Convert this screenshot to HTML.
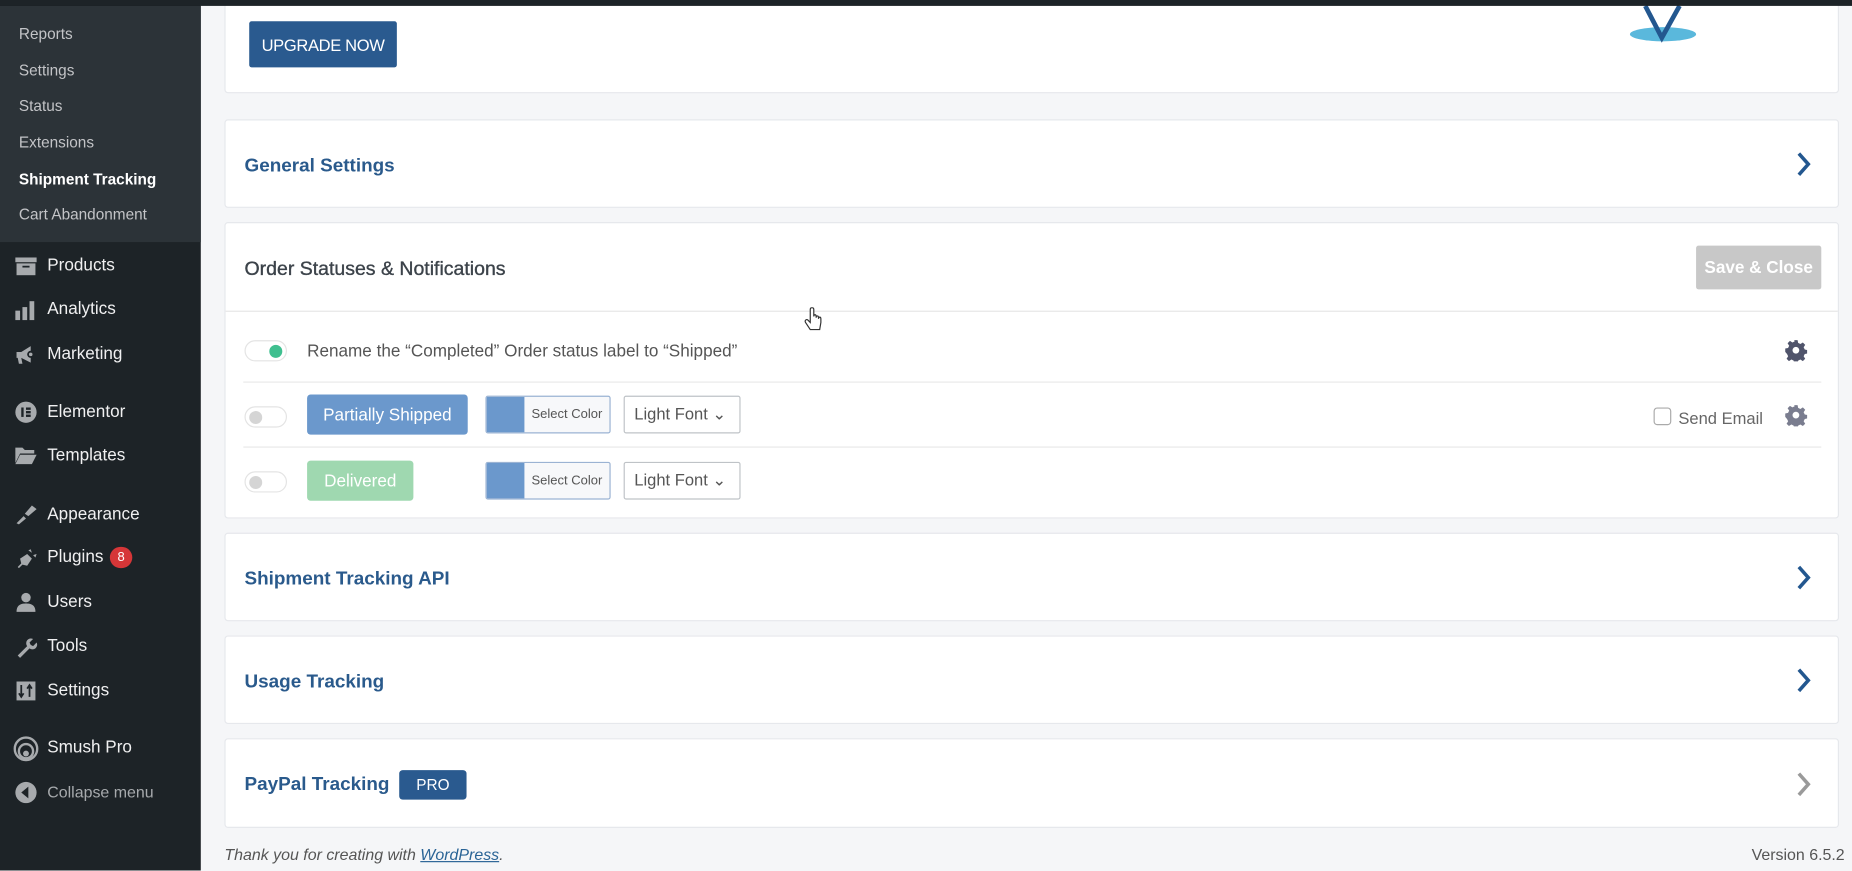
<!DOCTYPE html>
<html><head><meta charset="utf-8">
<style>
html,body{margin:0;padding:0;width:1852px;height:870px;overflow:hidden;background:#f5f6f8;}
#w{position:absolute;left:0;top:0;width:1568px;height:737px;transform:scale(1.18112);transform-origin:0 0;font-family:"Liberation Sans",sans-serif;background:#f5f6f8;}
.abs{position:absolute;}
#top{left:0;top:0;width:1568px;height:5px;background:#1d2327;z-index:10;}
#side{left:0;top:0;width:170px;height:737px;background:#1d2327;}
#sub{left:0;top:5px;width:170px;height:200px;background:#2c3338;}
.si{position:absolute;left:16px;font-size:13px;color:#c3c4c7;}
.mi{position:absolute;left:40px;font-size:14.5px;color:#f0f0f1;margin-top:2px;}
.ic{position:absolute;left:12px;width:20px;height:20px;margin-top:2px;}
.card{position:absolute;left:190px;width:1367px;background:#fff;border:1px solid #e6e8ec;border-radius:3px;box-sizing:border-box;}
.ttl{position:absolute;left:16px;font-size:16px;font-weight:bold;color:#2a5a8c;top:30px !important;}
.chev{position:absolute;right:22px;width:14px;height:22px;}
.tog{position:absolute;left:207px;width:36px;height:18px;border:1px solid #e4e4e4;border-radius:10px;background:#fff;box-sizing:border-box;}
.knob{position:absolute;top:3px;width:11px;height:11px;border-radius:50%;}
.hr{position:absolute;left:206px;width:1336px;height:1px;background:#e8e8e8;}
.selc{position:absolute;left:411px;width:106px;height:32px;border:1px solid #9bb3d3;border-radius:2px;box-sizing:border-box;background:#f7f8fa;overflow:hidden;}
.selc .sw{position:absolute;left:0;top:0;width:32px;height:32px;background:#6b98cc;}
.selc span{position:absolute;left:38px;top:9px;font-size:11px;color:#555;}
.dd{position:absolute;left:528px;width:99px;height:32px;border:1px solid #bfc3c7;border-radius:2px;box-sizing:border-box;background:#fff;}
.dd span{position:absolute;left:8px;top:6px;font-size:14px;color:#555;}
.gear{position:absolute;left:1511px;width:19px;height:19px;}
</style></head><body><div id="w">
<div class="abs" id="side"></div>
<div class="abs" id="sub"></div>
<div class="abs" id="top"></div>
<div class="si" style="top:21px">Reports</div>
<div class="si" style="top:52px">Settings</div>
<div class="si" style="top:82px">Status</div>
<div class="si" style="top:113px">Extensions</div>
<div class="si" style="top:144px;color:#fff;font-weight:bold">Shipment Tracking</div>
<div class="si" style="top:174px">Cart Abandonment</div>

<svg class="ic" style="top:214px" viewBox="0 0 20 20"><rect x="1" y="2" width="18" height="4" fill="#a7aaad"/><rect x="2" y="7" width="16" height="10" fill="#a7aaad"/><rect x="7" y="9" width="6" height="1.5" fill="#1d2327"/></svg>
<div class="mi" style="top:215px">Products</div>
<svg class="ic" style="top:251px" viewBox="0 0 20 20"><rect x="1" y="10" width="4" height="8" fill="#a7aaad"/><rect x="7" y="7" width="4" height="11" fill="#a7aaad"/><rect x="13" y="2" width="4" height="16" fill="#a7aaad"/></svg>
<div class="mi" style="top:252px">Analytics</div>
<svg class="ic" style="top:288px" viewBox="0 0 20 20"><path d="M2 8h4l8-5v14l-8-4H6l1 5H4l-1-5H2z" fill="#a7aaad"/><circle cx="14" cy="10" r="3" fill="#1d2327"/><circle cx="14" cy="10" r="1.5" fill="#a7aaad"/></svg>
<div class="mi" style="top:290px">Marketing</div>
<svg class="ic" style="top:337px" viewBox="0 0 20 20"><circle cx="10" cy="10" r="9" fill="#a7aaad"/><rect x="6" y="6" width="2" height="8" fill="#1d2327"/><rect x="10" y="6" width="4" height="2" fill="#1d2327"/><rect x="10" y="9" width="4" height="2" fill="#1d2327"/><rect x="10" y="12" width="4" height="2" fill="#1d2327"/></svg>
<div class="mi" style="top:339px">Elementor</div>
<svg class="ic" style="top:374px" viewBox="0 0 20 20"><path d="M1 3h6l2 2h8v3H5L1 16z" fill="#a7aaad"/><path d="M5 9h14l-4 8H1z" fill="#a7aaad"/></svg>
<div class="mi" style="top:376px">Templates</div>
<svg class="ic" style="top:424px" viewBox="0 0 20 20"><path d="M2 17l6-6 2 2-6 5zM9 9l6-7 4 3-7 6z" fill="#a7aaad"/></svg>
<div class="mi" style="top:426px">Appearance</div>
<svg class="ic" style="top:461px" viewBox="0 0 20 20"><path d="M3 17l3-3-1-4 6-4 4 4-4 6-4-1-3 3zM12 3l2-1 1 3zM16 7l3-1-1 3z" fill="#a7aaad"/></svg>
<div class="mi" style="top:462px">Plugins</div>
<div class="abs" style="left:93px;top:463px;width:19px;height:18px;border-radius:9px;background:#d63638;color:#fff;font-size:11px;text-align:center;line-height:18px">8</div>
<svg class="ic" style="top:498px" viewBox="0 0 20 20"><circle cx="10" cy="6" r="4" fill="#a7aaad"/><path d="M2 18c0-6 4-7 8-7s8 1 8 7z" fill="#a7aaad"/></svg>
<div class="mi" style="top:500px">Users</div>
<svg class="ic" style="top:536px" viewBox="0 0 20 20"><path d="M3 17l8-8a4 4 0 0 1 5-6l-3 3 1 2 2 1 3-3a4 4 0 0 1-6 5l-8 8z" fill="#a7aaad"/></svg>
<div class="mi" style="top:537px">Tools</div>
<svg class="ic" style="top:573px" viewBox="0 0 20 20"><rect x="2" y="2" width="16" height="16" fill="#a7aaad"/><path d="M6 5v10M4 12l2 3 2-3M13 15V5M11 8l2-3 2 3" stroke="#1d2327" stroke-width="1.5" fill="none"/></svg>
<div class="mi" style="top:575px">Settings</div>
<svg class="ic" style="top:621px;width:22px;height:22px;left:11px" viewBox="0 0 22 22"><circle cx="11" cy="11" r="9.5" fill="none" stroke="#a7aaad" stroke-width="2"/><circle cx="11" cy="13" r="6" fill="none" stroke="#a7aaad" stroke-width="2"/><circle cx="11" cy="15" r="2.5" fill="#a7aaad"/></svg>
<div class="mi" style="top:623px">Smush Pro</div>
<svg class="ic" style="top:659px" viewBox="0 0 20 20"><circle cx="10" cy="10" r="9" fill="#a7aaad"/><path d="M12 5v10l-6-5z" fill="#1d2327"/></svg>
<div class="mi" style="top:661px;font-size:13.5px;color:#a7aaad">Collapse menu</div>

<div class="card" style="top:-5px;height:84px"></div>
<div class="abs" style="left:211px;top:18px;width:125px;height:39px;background:#2a5a8f;border-radius:2px;color:#fff;font-size:14px;text-align:center;line-height:40px;letter-spacing:-0.3px">UPGRADE NOW</div>
<svg class="abs" style="left:1375px;top:0px" width="70" height="40" viewBox="0 0 70 40"><ellipse cx="33" cy="29" rx="28" ry="6" fill="#5ab8dc"/><path d="M18 5L32 32L47 5" stroke="#23578f" stroke-width="4" fill="none"/></svg>

<div class="card" style="top:101px;height:75px"><div class="ttl">General Settings</div>
<svg class="chev" style="top:26px" viewBox="0 0 14 22"><path d="M3 2l8 9-8 9" stroke="#23578f" stroke-width="3" fill="none"/></svg></div>

<div class="card" style="top:188px;height:251px">
<div class="ttl" style="color:#3c434a;font-weight:normal;font-size:16.5px;-webkit-text-stroke:0.3px #3c434a">Order Statuses &amp; Notifications</div>
<div class="abs" style="left:0;top:74px;width:1365px;height:1px;background:#e6e6e6"></div>
</div>
<div class="abs" style="left:1436px;top:208px;width:106px;height:37px;background:#c8c8c8;border-radius:2px;color:#fff;font-size:14.5px;font-weight:bold;text-align:center;line-height:39px">Save &amp; Close</div>
<svg class="abs" style="left:681px;top:260px" width="16" height="22" viewBox="0 0 16 22"><path d="M5 2v11l-2-2c-1-1-3 0-2 2l4 6h8l1-6V10c0-2-2-2-2 0V9c0-2-2-2-2 0V8c0-2-2-2-2 0V2c0-2-3-2-3 0z" fill="#fff" stroke="#333" stroke-width="1"/></svg>

<div class="tog" style="top:288px"><div class="knob" style="left:20px;background:#3fbf8f"></div></div>
<div class="abs" style="left:260px;top:290px;font-size:14.5px;color:#555">Rename the “Completed” Order status label to “Shipped”</div>
<svg class="gear" style="top:287px" viewBox="0 0 20 20"><path d="M8.5 1h3l.5 2.5 2 1 2.2-1.4 2.1 2.1-1.4 2.2 1 2 2.5.5v3l-2.5.5-1 2 1.4 2.2-2.1 2.1-2.2-1.4-2 1-.5 2.5h-3l-.5-2.5-2-1-2.2 1.4-2.1-2.1 1.4-2.2-1-2L.5 11.5v-3l2.5-.5 1-2L2.6 3.8 4.7 1.7 6.9 3.1l2-1z" fill="#50546b"/><circle cx="10" cy="10" r="3" fill="#fff"/></svg>
<div class="hr" style="top:323px"></div>

<div class="tog" style="top:344px"><div class="knob" style="left:3px;background:#d5d5d5"></div></div>
<div class="abs" style="left:260px;top:334px;width:136px;height:34px;background:#6b98cc;border-radius:3px;color:#fff;font-size:14.5px;text-align:center;line-height:36px">Partially Shipped</div>
<div class="selc" style="top:335px"><div class="sw"></div><span>Select Color</span></div>
<div class="dd" style="top:335px"><span>Light Font ⌄</span></div>
<div class="abs" style="left:1400px;top:345px;width:15px;height:15px;border:1px solid #aaa;border-radius:3px;box-sizing:border-box"></div>
<div class="abs" style="left:1421px;top:346px;font-size:14px;color:#666">Send Email</div>
<svg class="gear" style="top:342px" viewBox="0 0 20 20"><path d="M8.5 1h3l.5 2.5 2 1 2.2-1.4 2.1 2.1-1.4 2.2 1 2 2.5.5v3l-2.5.5-1 2 1.4 2.2-2.1 2.1-2.2-1.4-2 1-.5 2.5h-3l-.5-2.5-2-1-2.2 1.4-2.1-2.1 1.4-2.2-1-2L.5 11.5v-3l2.5-.5 1-2L2.6 3.8 4.7 1.7 6.9 3.1l2-1z" fill="#7a7d8f"/><circle cx="10" cy="10" r="3" fill="#fff"/></svg>
<div class="hr" style="top:378px"></div>

<div class="tog" style="top:399px"><div class="knob" style="left:3px;background:#d5d5d5"></div></div>
<div class="abs" style="left:260px;top:390px;width:90px;height:34px;background:#9fd8b0;border-radius:3px;color:#fff;font-size:14.5px;text-align:center;line-height:36px">Delivered</div>
<div class="selc" style="top:391px"><div class="sw"></div><span>Select Color</span></div>
<div class="dd" style="top:391px"><span>Light Font ⌄</span></div>

<div class="card" style="top:451px;height:75px"><div class="ttl">Shipment Tracking API</div>
<svg class="chev" style="top:26px" viewBox="0 0 14 22"><path d="M3 2l8 9-8 9" stroke="#23578f" stroke-width="3" fill="none"/></svg></div>
<div class="card" style="top:538px;height:75px"><div class="ttl">Usage Tracking</div>
<svg class="chev" style="top:26px" viewBox="0 0 14 22"><path d="M3 2l8 9-8 9" stroke="#23578f" stroke-width="3" fill="none"/></svg></div>
<div class="card" style="top:625px;height:76px"><div class="ttl">PayPal Tracking</div>
<div class="abs" style="left:147px;top:26px;width:57px;height:25px;background:#2a5a8f;border-radius:3px;color:#fff;font-size:13px;text-align:center;line-height:25px">PRO</div>
<svg class="chev" style="top:27px" viewBox="0 0 14 22"><path d="M3 2l8 9-8 9" stroke="#9a9a9a" stroke-width="3" fill="none"/></svg></div>

<div class="abs" style="left:190px;top:716px;font-size:13.5px;color:#555;font-style:italic">Thank you for creating with <span style="color:#2a6496;text-decoration:underline">WordPress</span>.</div>
<div class="abs" style="left:1483px;top:716px;font-size:13.5px;color:#555">Version 6.5.2</div>
</div></body></html>
